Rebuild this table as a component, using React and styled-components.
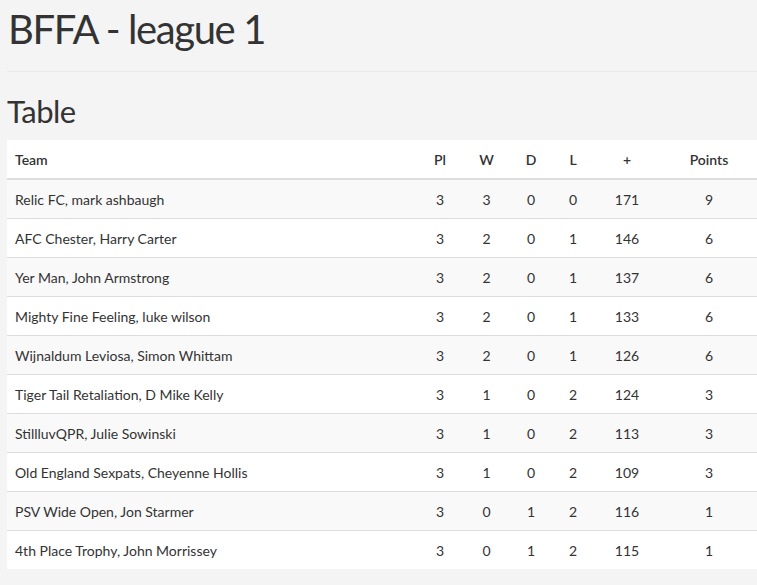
import React from "react";
import styled, { createGlobalStyle } from "styled-components";

const GlobalStyle = createGlobalStyle`
  html, body {
    margin: 0;
    padding: 0;
    background: #f4f4f4;
    overflow: hidden;
  }
  body {
    font-family: Lato, "Open Sans", sans-serif;
    color: #333;
  }
`;

const Page = styled.div`
  padding: 0 0 0 7px;
`;

const Title = styled.h1`
  margin: 0;
  padding: 4px 0 0 1px;
  font-size: 40px;
  font-weight: 400;
  line-height: 50px;
  letter-spacing: -1.4px;
`;

const Rule = styled.hr`
  margin: 17px 0 0;
  border: 0;
  border-top: 1px solid #e8e8e8;
`;

const SubTitle = styled.h2`
  margin: 0;
  padding: 19px 0 0;
  font-size: 31px;
  font-weight: 400;
  line-height: 40px;
  letter-spacing: -0.5px;
`;

const Table = styled.table`
  margin-top: 9px;
  width: 100%;
  border-collapse: collapse;
  table-layout: fixed;
  font-size: 14px;
`;

const Head = styled.th`
  height: 38px;
  padding: 0 8px;
  text-align: ${({ $left }) => ($left ? "left" : "center")};
  font-weight: 600;
  background: #fff;
  border-bottom: 2px solid #ddd;
`;

const Row = styled.tr`
  background: ${({ $odd }) => ($odd ? "#f9f9f9" : "#fff")};
`;

const Cell = styled.td`
  height: 38px;
  padding: 0 8px;
  text-align: ${({ $left }) => ($left ? "left" : "center")};
  border-top: 1px solid #ddd;
  white-space: nowrap;
`;

const columns = [
  { label: "Pl", width: 48 },
  { label: "W", width: 45 },
  { label: "D", width: 44 },
  { label: "L", width: 40 },
  { label: "+", width: 68 },
  { label: "Points", width: 96 },
];

const rows = [
  ["Relic FC, mark ashbaugh", 3, 3, 0, 0, 171, 9],
  ["AFC Chester, Harry Carter", 3, 2, 0, 1, 146, 6],
  ["Yer Man, John Armstrong", 3, 2, 0, 1, 137, 6],
  ["Mighty Fine Feeling, luke wilson", 3, 2, 0, 1, 133, 6],
  ["Wijnaldum Leviosa, Simon Whittam", 3, 2, 0, 1, 126, 6],
  ["Tiger Tail Retaliation, D Mike Kelly", 3, 1, 0, 2, 124, 3],
  ["StillluvQPR, Julie Sowinski", 3, 1, 0, 2, 113, 3],
  ["Old England Sexpats, Cheyenne Hollis", 3, 1, 0, 2, 109, 3],
  ["PSV Wide Open, Jon Starmer", 3, 0, 1, 2, 116, 1],
  ["4th Place Trophy, John Morrissey", 3, 0, 1, 2, 115, 1],
];

export default function App() {
  return (
    <Page>
      <GlobalStyle />
      <Title>BFFA - league 1</Title>
      <Rule />
      <SubTitle>Table</SubTitle>
      <Table>
        <colgroup>
          <col />
          {columns.map((c) => (
            <col key={c.label} style={{ width: c.width }} />
          ))}
        </colgroup>
        <thead>
          <tr>
            <Head $left>Team</Head>
            {columns.map((c) => (
              <Head key={c.label}>{c.label}</Head>
            ))}
          </tr>
        </thead>
        <tbody>
          {rows.map((r, i) => (
            <Row key={r[0]} $odd={i % 2 === 0}>
              {r.map((v, j) => (
                <Cell key={j} $left={j === 0}>
                  {v}
                </Cell>
              ))}
            </Row>
          ))}
        </tbody>
      </Table>
    </Page>
  );
}
